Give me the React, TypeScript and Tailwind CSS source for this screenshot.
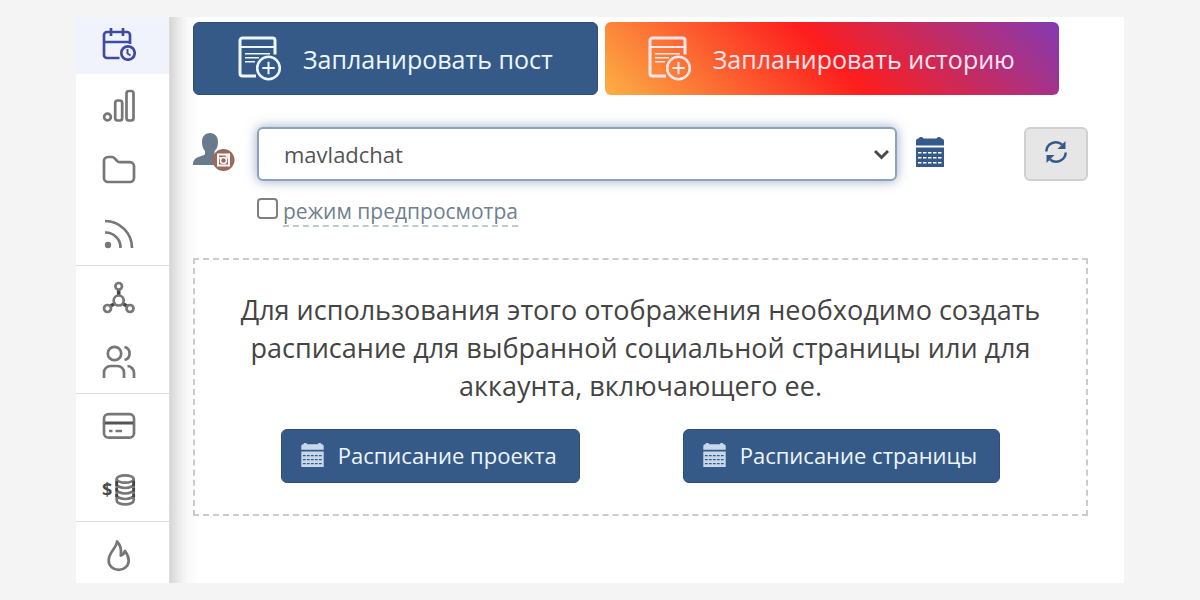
import { useId, useState } from 'react'
import type { ReactNode } from 'react'

interface NavItem {
  label: string
  icon: ReactNode
  active?: boolean
}

const NAV_GROUPS: NavItem[][] = [
  [
    { label: 'Календарь', icon: <CalendarClockIcon />, active: true },
    { label: 'Аналитика', icon: <BarsIcon /> },
    { label: 'Файлы', icon: <FolderIcon /> },
    { label: 'Ленты', icon: <FeedIcon /> },
  ],
  [
    { label: 'Аккаунты', icon: <NodesIcon /> },
    { label: 'Команда', icon: <UsersIcon /> },
  ],
  [
    { label: 'Оплата', icon: <CardIcon /> },
    { label: 'Баланс', icon: <CoinsIcon /> },
  ],
  [{ label: 'Новое', icon: <FlameIcon /> }],
]

export default function App() {
  return (
    <div className="flex min-h-screen bg-[#f4f4f4] px-[76px] py-[17px] font-['Open_Sans','Noto_Sans',sans-serif] text-[#444]">
      <div className="flex flex-1 bg-white">
        <Sidebar />
        <main className="min-w-0 flex-1 bg-[linear-gradient(to_right,#d6d6d6,#e9e9e9_8px,#f8f8f8_17px,#fff_28px)] pt-[5px] pr-9 pl-[23px]">
          <div className="flex gap-[7px]">
            <button
              type="button"
              className="flex h-[73px] items-center gap-[21px] rounded-md border border-[#2f4f78] bg-[#365a87] pt-1 pr-11 pb-0.5 pl-[43px] text-[25px] font-medium text-[#edf6ff]"
            >
              <PostIcon />
              Запланировать пост
            </button>
            <button
              type="button"
              className="flex h-[73px] items-center gap-[21px] rounded-md bg-[linear-gradient(45deg,#fcb045,#fd1d1d_50%,#833ab4)] pt-1 pr-11 pb-0.5 pl-[42px] text-[25px] font-medium text-[#ffe6ee]"
            >
              <PostIcon />
              Запланировать историю
            </button>
          </div>

          <PageFilter />

          <section className="mt-[31px] border-2 border-dashed border-[#cbcbcb] px-6 pt-[31px] pb-[31px]">
            <p className="text-center text-[27px] leading-[38px]">
              Для использования этого отображения необходимо создать расписание для выбранной социальной страницы или для
              аккаунта, включающего ее.
            </p>
            <div className="mt-6 flex justify-center gap-[103px]">
              <ScheduleButton>Расписание проекта</ScheduleButton>
              <ScheduleButton>Расписание страницы</ScheduleButton>
            </div>
          </section>
        </main>
      </div>
    </div>
  )
}

function Sidebar() {
  return (
    <nav className="flex w-[94px] shrink-0 flex-col border-r border-[#dcdcdc] bg-white">
      {NAV_GROUPS.map((group, i) => (
        <div key={i} className="flex flex-col border-b border-[#dedede] last:border-b-0">
          {group.map((item) => (
            <a
              key={item.label}
              href="#"
              aria-label={item.label}
              className={navLinkClass(item.active, i === NAV_GROUPS.length - 1)}
            >
              {item.icon}
            </a>
          ))}
        </div>
      ))}
    </nav>
  )
}

function navLinkClass(active: boolean | undefined, inLastGroup: boolean) {
  if (active) return 'flex h-[57px] items-center justify-center bg-[#f1f3fc] pr-2 pb-1 text-[#3f4ba3]'
  if (inLastGroup) return 'flex h-[61px] items-center justify-center pt-1 pr-2 text-[#777]'
  return 'flex h-16 items-center justify-center pr-2 text-[#777] last:h-[63px]'
}

function PageFilter() {
  const [preview, setPreview] = useState(false)
  const previewId = useId()

  return (
    <div className="mt-8 flex items-start">
      <div className="w-16 shrink-0 pt-1">
        <AccountIcon />
      </div>
      <div className="min-w-0 flex-1">
        <div className="grid items-center">
          <select
            aria-label="Страница"
            className="col-start-1 row-start-1 h-[54px] w-full appearance-none rounded-md border-2 border-[#8ea2bb] bg-white px-[25px] text-[22px] text-[#555] shadow-[0_0_12px_rgba(54,90,135,0.5)] outline-none"
          >
            <option>mavladchat</option>
          </select>
          <svg
            className="pointer-events-none col-start-1 row-start-1 mr-2 justify-self-end"
            width="15"
            height="11"
            viewBox="0 0 15 11"
            fill="none"
            stroke="#4a4a4a"
            strokeWidth="3"
          >
            <path d="M1 2l6.500 6.500L14 2" />
          </svg>
        </div>
        <div className="mt-4 flex items-start gap-[5px]">
          <input
            id={previewId}
            type="checkbox"
            checked={preview}
            onChange={(e) => setPreview(e.target.checked)}
            className="mt-px size-[21px] appearance-none rounded border-2 border-[#808080] bg-white checked:bg-[#365a87]"
          />
          <label htmlFor={previewId} className="border-b-2 border-dashed border-[#c2c8cf] text-[21px] leading-7 text-[#708090]">
            режим предпросмотра
          </label>
        </div>
      </div>
      <button type="button" aria-label="Календарь" className="mt-[10px] mr-20 ml-[19px] text-[#365a87]">
        <CalendarGridIcon width={28} height={30} />
      </button>
      <button
        type="button"
        aria-label="Обновить"
        className="flex h-[54px] w-16 shrink-0 items-center justify-center rounded-md border-2 border-[#d0d0d0] bg-[#e6e6e6] pb-1 text-[#365a87]"
      >
        <RefreshIcon />
      </button>
    </div>
  )
}

function ScheduleButton({ children }: { children: ReactNode }) {
  return (
    <button
      type="button"
      className="flex h-[54px] items-center gap-[14px] rounded-md border border-[#2f4f78] bg-[#365a87] pr-[22px] pb-0.5 pl-[19px] text-[22px] font-medium text-[#edf6ff]"
    >
      <span className="text-[#c8d8eb]">
        <CalendarGridIcon width={23} height={24} />
      </span>
      {children}
    </button>
  )
}

function NavIcon({ children }: { children: ReactNode }) {
  return (
    <svg
      width="34"
      height="34"
      viewBox="0 0 34 34"
      fill="none"
      stroke="currentColor"
      strokeWidth="2.700"
      strokeLinejoin="round"
    >
      {children}
    </svg>
  )
}

function CalendarClockIcon() {
  return (
    <NavIcon>
      <path d="M28 17V8a3 3 0 0 0-3-3H5a3 3 0 0 0-3 3v20a3 3 0 0 0 3 3h12.500M2 15h26M9 1v8M21 1v8" />
      <circle cx="26" cy="26" r="6.700" />
      <path d="M25.500 22v4.500l3 2" strokeWidth="2" />
    </NavIcon>
  )
}

function BarsIcon() {
  return (
    <NavIcon>
      <circle cx="5.500" cy="28" r="3.400" />
      <rect x="13.200" y="11.500" width="7" height="20" rx="2.500" />
      <rect x="24.500" y="2" width="7" height="29.500" rx="2.500" />
    </NavIcon>
  )
}

function FolderIcon() {
  return (
    <NavIcon>
      <path d="M2 8a4 4 0 0 1 4-4h4c1 0 2 .5 2.700 1.300l2 2.200c1 1.200 1.800 1.700 3 1.700H28a4 4 0 0 1 4 4V25a4 4 0 0 1-4 4H6a4 4 0 0 1-4-4z" />
    </NavIcon>
  )
}

function FeedIcon() {
  return (
    <NavIcon>
      <circle cx="6" cy="28" r="3.200" fill="currentColor" stroke="none" />
      <path d="M3 15.500A15 15 0 0 1 18.500 31M3 4A27 27 0 0 1 30 31" />
    </NavIcon>
  )
}

function NodesIcon() {
  return (
    <NavIcon>
      <path d="M16.700 9v5M12 23l-3.500 2M21.500 23l3.500 2" stroke="#444" strokeWidth="3.500" />
      <circle cx="16.700" cy="5.300" r="3.300" />
      <circle cx="16.700" cy="19.500" r="5" />
      <circle cx="5.500" cy="27.500" r="3.500" />
      <circle cx="28" cy="27.500" r="3.500" />
    </NavIcon>
  )
}

function UsersIcon() {
  return (
    <NavIcon>
      <circle cx="12.500" cy="8.500" r="6.700" />
      <path d="M22.500 2a6.700 6.700 0 0 1 0 13M2 33v-5.500a6.500 6.500 0 0 1 6.500-6.500h7a6.500 6.500 0 0 1 6.500 6.500V33M25.500 21a7 7 0 0 1 6.500 7v5" />
    </NavIcon>
  )
}

function CardIcon() {
  return (
    <NavIcon>
      <rect x="2" y="5.200" width="30" height="23.500" rx="4.500" />
      <path d="M3 14h28" stroke="#555" strokeWidth="3" />
      <path d="M7 22h3.500M13.500 22H20" />
    </NavIcon>
  )
}

function CoinsIcon() {
  return (
    <NavIcon>
      <text x="0" y="23" fontSize="18" fontWeight="700" fill="#4a4a4a" stroke="none">
        $
      </text>
      <ellipse cx="23.200" cy="6" rx="8.500" ry="3.700" />
      <path d="M14.700 6v21.500c0 2 3.800 3.800 8.500 3.800s8.500-1.800 8.500-3.800V6M14.700 11c0 2.200 3.800 4 8.500 4s8.500-1.800 8.500-4M14.700 16.500c0 2.200 3.800 4 8.500 4s8.500-1.800 8.500-4M14.700 22c0 2.200 3.800 4 8.500 4s8.500-1.800 8.500-4" />
      <path d="M14.700 8v5M31.700 8v5M14.700 15v3.500M31.700 15v3.500M14.700 21v3M31.700 21v3" stroke="#444" />
    </NavIcon>
  )
}

function FlameIcon() {
  return (
    <NavIcon>
      <path d="M15 3.500C14.500 10.500 6.700 14 6.700 22.500c0 5.500 4.500 9.300 10 9.300s10-3.800 10-9.300c0-4-2-7.200-3.700-9.500-.7 2-2 3.800-4.200 4.500.8-5.500-.3-10.500-3.800-14z" />
    </NavIcon>
  )
}

function PostIcon() {
  return (
    <svg width="45" height="46" viewBox="0 0 45 46" fill="none" stroke="currentColor" className="mb-[3px] shrink-0">
      <path
        d="M38 19.500V5.500a2.500 2.500 0 0 0-2.500-2.500h-30A2.500 2.500 0 0 0 3 5.500V38.500a2.500 2.500 0 0 0 2.500 2.500H19"
        strokeWidth="3"
      />
      <path d="M3 12h35" strokeWidth="2" />
      <path d="M8 18.700h25M8 22.700h14M8 26.700h10" strokeWidth="1.500" />
      <circle cx="31.500" cy="33" r="11.300" strokeWidth="2.500" />
      <path d="M31.500 26.800v12.400M25.300 33h12.400" strokeWidth="2" />
    </svg>
  )
}

function AccountIcon() {
  return (
    <svg width="43" height="42" viewBox="0 0 43 42">
      <path
        d="M17 2c5 0 8 3.500 8 9 0 4-1 7-3.500 9v3.500c1 2 9.500 3 9.500 10.500H0c0-6 3-7 7-8.500 3-1 4.500-1.500 5-2.500V20C10 18 9 15 9 11c0-5.500 3-9 8-9z"
        fill="#687b8c"
      />
      <circle cx="30.500" cy="29" r="11" fill="#9c6a58" />
      <rect x="25" y="23.500" width="11" height="11" fill="none" stroke="#fff" strokeWidth="2" />
      <circle cx="30.500" cy="29.500" r="3" fill="none" stroke="#fff" strokeWidth="1.500" />
      <path d="M25 27h3M33 27h3M32.500 25h2.500" stroke="#fff" strokeWidth="1.500" />
    </svg>
  )
}

function CalendarGridIcon({ width, height }: { width: number; height: number }) {
  return (
    <svg width={width} height={height} viewBox="0 0 28 30">
      <path d="M0 8.500V4c0-1.500 1-2.500 2.500-2.500C3 .5 4 0 5 0s2 .5 2.500 1.500h13C21 .5 22 0 23 0s2 .5 2.500 1.500C27 1.500 28 2.500 28 4v4.500z" fill="currentColor" />
      <path
        d="M0 10.500h28V30H0zM2 15v1.600h3.500V15zm5 0v1.600h3.500V15zm5 0v1.600h3.500V15zm5 0v1.600h3.500V15zm5 0v1.600h3.500V15zM2 20v1.600h3.500V20zm5 0v1.600h3.500V20zm5 0v1.600h3.500V20zm5 0v1.600h3.500V20zm5 0v1.600h3.500V20zM2 25v1.600h3.500V25zm5 0v1.600h3.500V25zm5 0v1.600h3.500V25zm5 0v1.600h3.500V25zm5 0v1.600h3.500V25z"
        fill="currentColor"
        fillRule="evenodd"
      />
    </svg>
  )
}

function RefreshIcon() {
  return (
    <svg width="24" height="24" viewBox="0 0 24 24" fill="none" stroke="currentColor" strokeWidth="2.500">
      <path d="M2.300 11.500A9.600 9.600 0 0 1 18 4.500M21.700 12.500A9.600 9.600 0 0 1 6 19.500" />
      <path d="M21.500 1v8h-8zM2.500 23v-8h8z" fill="currentColor" stroke="none" />
    </svg>
  )
}
